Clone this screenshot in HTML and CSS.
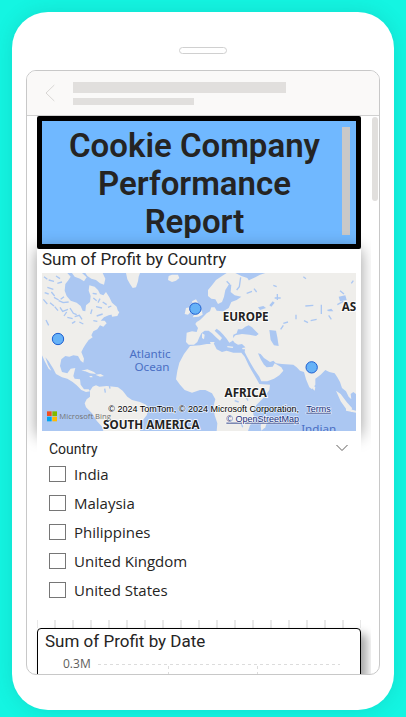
FILE: index.html
```html
<!DOCTYPE html>
<html lang="en">
<head>
<meta charset="utf-8">
<meta name="viewport" content="width=device-width, initial-scale=1">
<title>Cookie Company Performance Report</title>
<link rel="stylesheet" href="styles.css">
</head>
<body>
<main class="phone">
  <div class="speaker"></div>
  <div class="screen">
    <header class="topbar">
      <button class="back" type="button" aria-label="Back">
        <svg viewBox="0 0 10 18" width="10" height="18"><path d="M9.300 1 1 9l8.300 8"/></svg>
      </button>
      <div class="placeholder">
        <div class="bar bar-long"></div>
        <div class="bar bar-short"></div>
      </div>
    </header>
    <div class="viewport">
      <div class="canvas">
        <section class="banner">
          <h1>Cookie Company Performance Report</h1>
          <div class="banner-scroll"></div>
        </section>

        <section class="card map-card">
          <h2>Sum of Profit by Country</h2>
          <svg class="map" viewBox="6 9 942 474" role="img" aria-label="Map of profit by country">
            <rect class="sea" x="6" y="9" width="942" height="474"/>
            <g class="land">
              <!-- North and Central America -->
              <path d="M6 9H82L92 20 84 32 76 42 74 62 80 78 92 92 110 98 122 108 128 122 136 124 138 106 150 96 152 78 146 62 148 46 164 50 174 60 180 72 190 76 198 66 208 82 216 98 230 110 234 124 224 132 206 136 192 142 182 152 194 152 200 160 190 170 180 166 172 178 160 184 154 196 158 202 146 210 136 224 130 234 124 246 132 266 130 278 122 272 114 258 100 256 88 260 76 258 64 268 60 288 66 306 82 310 92 296 106 294 100 318 104 326 120 328 122 344 132 358 146 358 150 364 138 366 124 360 110 346 98 336 82 326 66 322 48 312 40 296 26 274 16 262 24 284 34 302 26 296 14 274 6 256Z"/>
              <path d="M96 9H126L140 22 132 34 120 26 104 20Z"/>
              <path d="M136 9H188L196 26 192 44 180 40 168 30 154 26 142 18Z"/>
              <path d="M214 128l16-8 8 6-6 12-16 2zM124 302l18-4 20 8 6 6-18-2-14-6zM166 314l16-2 10 6-12 2zM148 318l8 0 2 4-8 0z"/>
              <!-- Greenland and Iceland -->
              <path d="M258 9H300L296 20 294 34 288 52 278 54 270 42 262 28Z"/>
              <path d="M386 18l10-4 18 0 4 10-10 8-12 4-12-6z"/>
              <!-- South America -->
              <path d="M150 362 158 350 168 346 178 350 200 348 222 350 234 352 248 362 262 380 276 390 300 396 318 404 326 418 320 436 306 454 300 483H190L186 470 170 452 156 430 138 412 134 400 140 388 150 380Z"/>
              <!-- British Isles -->
              <path d="M456 94l12-6 6 10 4 12 8 14 2 10-12 6-18 2 6-10-2-14zM438 114l12-2 2 14-8 8-10-2z"/>
              <!-- Europe and Asia -->
              <path d="M948 9V483H948V372L940 366 932 372 934 388 926 380 918 364 906 354 900 336 892 322 884 310 868 306 856 300 842 314 826 326 826 344 816 358 808 352 798 328 792 306 780 302 770 292 760 284 726 282 708 280 700 272 690 276 672 264 662 252 654 250 662 268 672 284 680 292 698 290 704 280 724 292 730 302 718 316 702 326 682 334 664 334 658 320 644 300 632 280 620 258 614 246 616 232 606 222 594 224 584 218 576 208 586 196 606 192 628 194 648 198 656 192 646 182 636 172 626 166 616 170 606 178 594 178 590 190 580 194 578 212 568 218 560 206 550 194 540 184 530 176 524 182 538 196 546 204 540 212 528 202 516 190 506 182 494 182 484 190 478 202 472 216 462 224 446 224 438 216 440 188 456 184 470 186 474 174 466 162 470 156 480 150 490 140 500 130 510 124 514 112 524 112 530 122 550 124 566 114 574 96 590 90 604 80 584 76 572 66 574 44 566 44 556 60 552 80 546 96 534 102 526 88 514 86 504 78 504 60 516 46 528 30 546 18 560 9H586L604 18 622 24 632 40 620 44 628 30 646 22 660 14 676 9Z"/>
              <path d="M688 180l20 2 4 20 4 26-14-2-10-16z" class="sea"/>
              <path d="M654 112l16-4 8 6-18 6zM688 106l10-12 6 4-10 12zM860 120l14-4 6 8-14 0zM896 80l20-4 4 14-20 4z" class="sea"/>
              <path d="M510 216l14 0-4 8-8-2zM562 228l18 2-2 4-16-2zM606 234l14-2-4 6-8 0zM486 190l8 4-2 14-6-4z"/>
              <!-- Africa -->
              <path d="M450 228 480 226 500 222 522 222 530 238 546 246 560 242 580 248 604 248 614 260 626 286 636 304 648 324 658 342 690 344 688 360 672 382 650 404 638 424 644 450 630 466 624 483H530L532 460 524 436 520 410 526 388 516 370 496 360 480 360 456 368 434 360 420 344 408 328 412 302 418 278 432 252Z"/>
              <path d="M678 436l6 10-8 26-12 10-2-14 4-16z"/>
              <path d="M818 344l8 8-2 10-6-6zM888 362l14 10 18 24 16 18-2 12-16-10-16-22zM918 414l30 8v6l-30-6z"/>
            </g>
            <g class="water">
              <path d="M26 30l16 4M22 52l18 6M34 66l10 12M42 82l14 8M10 88l12 14M56 92l14 6M60 112l8 12 16-6M90 114l10 16 10 4M104 140l14-4 8 12M82 142l16 4M68 98l18-2M44 110l10 12M18 150l8 16M160 84l10 8M168 110l18 4M188 96l12 8M170 138l18-6M194 356l2 12M208 346l2 10"/>
              <path d="M12 20l10 8M48 18l12 8M52 40l14-4M14 68l12 4M30 98l12 10M72 80l-10 8M80 126l-8 12M118 156l12 6M96 160l10-6M158 70l12 2M180 86l-6 12M204 112l10-4M156 118l-4 14M160 152l12 2"/>
              <path d="M590 60l8-10 4-28M620 70l16-6M642 56l8 10M712 90v-18M704 84h18M768 134v14M796 108l24-2M792 152l12 6M812 152l18-4M844 104v28M866 136l8 12M892 104l18-10M900 62l12 10M730 160l14-4M722 178l8-12M700 46l10 4M790 20l8 6M584 392l12 4M616 378l8 14M604 408l10 4M560 34l10 10M604 460l4 12M934 40l6-8"/>
            </g>
            <g class="labels">
              <text x="617" y="152">EUROPE</text>
              <text x="617" y="381">AFRICA</text>
              <text x="334" y="476">SOUTH AMERICA</text>
              <text x="946" y="122">ASIA</text>
            </g>
            <g class="ocean">
              <text x="330" y="264">Atlantic</text>
              <text x="336" y="303">Ocean</text>
              <text x="836" y="490">Indian</text>
            </g>
            <g class="points">
              <circle cx="54" cy="207" r="17"/>
              <circle cx="466" cy="116" r="17"/>
              <circle cx="815" cy="292" r="17"/>
            </g>
            <g>
              <path fill="#f25022" d="M21 424h14v14H21z"/>
              <path fill="#7fba00" d="M37 424h14v14H37z"/>
              <path fill="#00a4ef" d="M21 440h14v14H21z"/>
              <path fill="#ffb900" d="M37 440h14v14H37z"/>
              <text class="bing" x="58" y="447">Microsoft Bing</text>
            </g>
            <g class="credits">
              <text x="205" y="425">© 2024 TomTom, © 2024 Microsoft Corporation,</text>
              <a href="#terms"><text x="799" y="425">Terms</text></a>
              <a href="#osm"><text x="559" y="455">© OpenStreetMap</text></a>
            </g>
          </svg>
        </section>

        <section class="slicer">
          <div class="slicer-head">
            <h3>Country</h3>
            <button class="expand" type="button" aria-label="Expand">
              <svg viewBox="0 0 12 8" width="12" height="8"><path d="M.500 1 6 6.500 11.500 1"/></svg>
            </button>
          </div>
          <label><input type="checkbox">India</label>
          <label><input type="checkbox">Malaysia</label>
          <label><input type="checkbox">Philippines</label>
          <label><input type="checkbox">United Kingdom</label>
          <label><input type="checkbox">United States</label>
        </section>

        <div class="ticks"></div>
        <section class="card chart-card">
          <h2>Sum of Profit by Date</h2>
          <div class="plot">
            <span class="axis">0.3M</span>
            <svg class="grid" width="242" height="20" viewBox="0 0 242 20"><path d="M0 10.500H242M70.500 12V20M159.500 12V20"/></svg>
          </div>
        </section>
      </div>
      <div class="scroll"></div>
    </div>
  </div>
</main>
</body>
</html>
```
FILE: styles.css
```css
* { box-sizing: border-box; }

body {
  margin: 0;
  height: 100vh;
  padding: 12px 12px 7px;
  display: flex;
  background: #14f5e2;
  font-family: Roboto, "Open Sans", sans-serif;
  color: #252423;
}

h1, h2, h3 { margin: 0; font-weight: 400; }

button { padding: 0; border: 0; background: none; display: flex; }

.phone {
  flex: 1;
  min-width: 0;
  display: flex;
  flex-direction: column;
  padding: 35px 14px;
  border-radius: 36px;
  background: #fff;
  box-shadow: 0 0 20px rgba(0, 80, 80, 0.14);
}

.speaker {
  flex: none;
  width: 48px;
  height: 7px;
  margin: 0 auto 16px;
  border: 1px solid #d0d0d0;
  border-radius: 4px;
}

.screen {
  flex: 1;
  min-height: 0;
  display: flex;
  flex-direction: column;
  overflow: hidden;
  border: 1px solid #c8c8c8;
  border-radius: 10px;
}

.topbar {
  flex: none;
  display: flex;
  align-items: center;
  gap: 18px;
  height: 45px;
  padding: 0 18px;
  background: #faf9f8;
  border-bottom: 1px solid #d0d0d0;
}

.back svg, .expand svg { fill: none; stroke: #d8d6d4; }
.expand svg { stroke: #605e5c; }

.placeholder { flex: 1; display: grid; gap: 5px; }
.bar { background: #e1dfdd; }
.bar-long { width: 74%; height: 11px; }
.bar-short { width: 42%; height: 7px; }

.viewport { flex: 1; min-height: 0; display: flex; gap: 1px; }

.canvas {
  flex: 1;
  min-width: 0;
  overflow: hidden;
  padding: 0 10px;
}

.scroll {
  width: 6px;
  height: 84px;
  margin: 1px 1px 0 0;
  border-radius: 3px;
  background: #e1dfdd;
}

.banner {
  display: flex;
  height: 133px;
  padding: 6px 6px 6px 5px;
  border: 5px solid #000;
  border-radius: 2px;
  background: #70b8ff;
}

.banner h1 {
  flex: 1;
  height: 111px;
  overflow: hidden;
  text-align: center;
  font-size: 33px;
  line-height: 38px;
  font-weight: 600;
}

.banner-scroll { width: 8px; height: 108px; background: #c8c8c8; }

.card { background: #fff; }

.card h2 { font-size: 17px; line-height: 20px; }

.map-card {
  position: relative;
  padding: 0 5px 5px;
  box-shadow: 0 0 15px rgba(0, 0, 0, 0.4);
}

.map-card h2 { padding-bottom: 4px; }

.map { display: block; width: 100%; }
.sea { fill: #abc7f2; }
.land { fill: #efeeeb; }
.land .sea { fill: #abc7f2; }
.water { fill: none; stroke: #abc7f2; stroke-width: 4; }

.labels {
  font: 700 35px "Noto Sans", sans-serif;
  fill: #222;
  stroke: #fff;
  stroke-width: 5px;
  paint-order: stroke;
  text-anchor: middle;
}

.ocean {
  font: 35px "Noto Sans", sans-serif;
  fill: #4a6fc4;
  text-anchor: middle;
}

.points { fill: #66b2f7; stroke: #1f5fd0; stroke-width: 3px; }

.bing { font: 23px "Open Sans", sans-serif; fill: #737373; }

.credits {
  font: 27px "Liberation Sans", sans-serif;
  fill: #000;
  stroke: rgba(255, 255, 255, 0.7);
  stroke-width: 4px;
  paint-order: stroke;
}
.credits a { fill: #1a2f7a; text-decoration: underline; }

.slicer {
  position: relative;
  padding: 0 12px 16px;
  background: #fff;
}

.slicer-head {
  display: flex;
  align-items: center;
  justify-content: space-between;
  height: 23px;
  padding-right: 1px;
}

.slicer h3 { padding-top: 2px; font-size: 14px; line-height: 20px; }

.slicer label {
  display: flex;
  align-items: center;
  gap: 8px;
  height: 29px;
  font: 15px "Open Sans", sans-serif;
}

.slicer input {
  appearance: none;
  width: 17px;
  height: 16px;
  margin: 0;
  border: 1px solid #767676;
  border-radius: 0;
  background: #fff;
}

.ticks {
  height: 8px;
  background: repeating-linear-gradient(90deg, #e8e8e8 0 1px, transparent 1px 17px, #e8e8e8 17px 18px);
}

.chart-card {
  height: 200px;
  padding: 2px 7px;
  border: 1px solid #000;
  border-radius: 4px;
  box-shadow: 6px 6px 10px rgba(0, 0, 0, 0.35);
}

.plot {
  display: flex;
  align-items: flex-start;
  gap: 7px;
  padding: 3px 0 0 18px;
}

.axis { font: 12px/20px "Open Sans", sans-serif; color: #605e5c; }

.grid { fill: none; stroke: #dcdcdc; stroke-dasharray: 3 3; }
```
